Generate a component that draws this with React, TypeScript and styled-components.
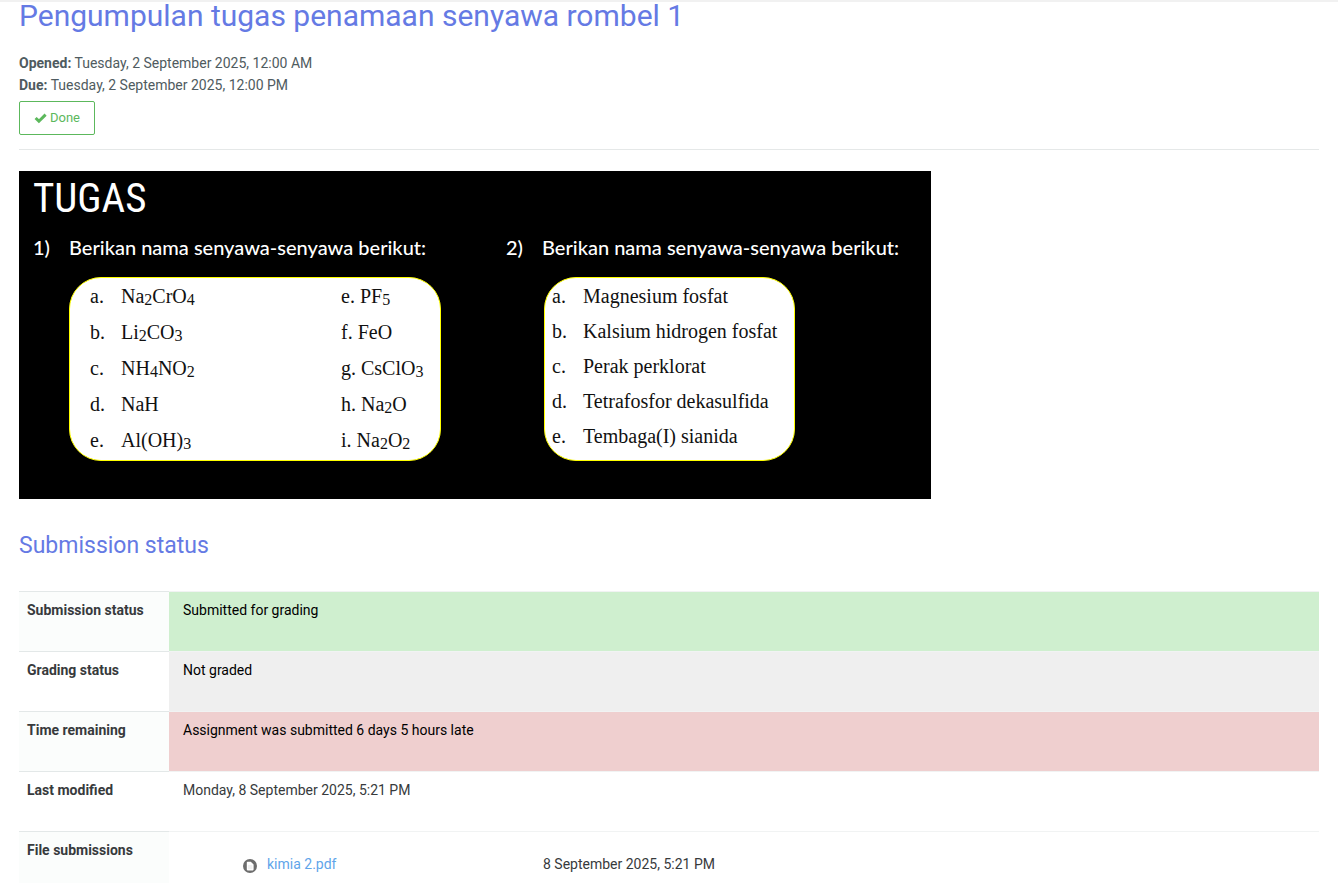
import React from 'react';
import styled, { createGlobalStyle } from 'styled-components';

const GlobalStyle = createGlobalStyle`
  *, *::before, *::after { box-sizing: border-box; }
  body {
    margin: 0;
    background: #fff;
    color: #373a3c;
    font-family: Roboto, "Liberation Sans", sans-serif;
    font-size: 14px;
    line-height: 22px;
  }
`;

const Page = styled.main`
  padding: 0 19px;
  border-top: 2px solid #f1f1f1;
`;

const Title = styled.h1`
  margin: 0 0 22px;
  color: #657ae4;
  font-size: 30px;
  font-weight: 400;
  line-height: 28px;
`;

const Dates = styled.div`
  color: #4f5b60;
`;

const DateLine = styled.p`
  margin: 0;
`;

const DoneButton = styled.button`
  display: inline-flex;
  align-items: center;
  gap: 3px;
  height: 34px;
  margin-top: 5px;
  padding: 0 14px;
  border: 1px solid #5cb85c;
  border-radius: 2px;
  background: #fff;
  color: #5cb85c;
  font: 13px/20px Roboto, "Liberation Sans", sans-serif;
`;

const Divider = styled.hr`
  height: 1px;
  margin: 14px 0 21px;
  border: 0;
  background: #e5e8e8;
`;

const Slide = styled.section`
  width: 912px;
  max-width: 100%;
  min-height: 328px;
  padding: 4px 14px 38px;
  background: #000;
  color: #fff;
`;

const SlideTitle = styled.h2`
  margin: 0 0 12px;
  font: 400 41px/46px "Liberation Sans Narrow", "Roboto Condensed", Roboto, sans-serif;
`;

const Questions = styled.div`
  display: grid;
  grid-template-columns: 473px 1fr;
`;

const Question = styled.div`
  display: grid;
  grid-template-columns: 36px 1fr;
  row-gap: 16px;
  align-content: start;
  font: 500 20px/28px Lato, sans-serif;
`;

const Card = styled.div<{ $width: number }>`
  display: flex;
  grid-column: 2;
  width: ${({ $width }) => $width}px;
  height: 184px;
  border: 1px solid #ff0;
  border-radius: 32px;
  background: #fff;
  color: #111;
`;

const Items = styled.ul<{ $line: number; $marker: number }>`
  margin: 0;
  padding: 0;
  list-style: none;
  font: 20px/${({ $line }) => $line}px "Liberation Serif", serif;

  li {
    display: grid;
    grid-template-columns: ${({ $marker }) => $marker}px auto;
    white-space: nowrap;
  }

  sub {
    font-size: 16px;
    line-height: 0;
    vertical-align: -2px;
  }
`;

const FormulaCard = styled(Card)`
  padding-left: 20px;

  ${Items}:first-child { width: 251px; }
`;

const NameCard = styled(Card)`
  margin-left: 2px;
  padding: 1px 0 0 7px;
`;

const Heading = styled.h3`
  margin: 33px 0 31px;
  color: #657ae4;
  font-size: 23px;
  font-weight: 400;
  line-height: 28px;
`;

const StatusTable = styled.table`
  width: 100%;
  border-collapse: collapse;
  table-layout: fixed;
`;

const Row = styled.tr<{ $last?: boolean }>`
  height: ${({ $last }) => ($last ? 52 : 60)}px;

  &:nth-child(odd) > th { background: #fbfdfc; }
`;

const Label = styled.th`
  width: 150px;
  padding: 7px 8px;
  border-top: 1px solid #e3e8e8;
  font-weight: 700;
  text-align: left;
  vertical-align: top;
`;

const tones = {
  plain: ['#fff', '#373a3c'],
  good: ['#cfefcf', '#000'],
  neutral: ['#efefef', '#000'],
  late: ['#efcfcf', '#000'],
};

const Value = styled.td<{ $tone: keyof typeof tones }>`
  padding: 7px 14px;
  border-top: 1px solid #f1f3f3;
  background: ${({ $tone }) => tones[$tone][0]};
  color: ${({ $tone }) => tones[$tone][1]};
  vertical-align: top;
`;

const FileRow = styled.div`
  display: grid;
  grid-template-columns: 300px 1fr;
  padding: 14px 0 0 60px;
`;

const FileName = styled.span`
  display: flex;
  align-items: center;
  gap: 10px;

  svg { margin-top: 4px; }
`;

const FileLink = styled.a`
  color: #5fa5ea;
  text-decoration: none;
`;

const CheckIcon = () => (
  <svg width="13" height="11" viewBox="0 0 13 11" aria-hidden="true">
    <path d="M1.6 5 4.9 8.2 11.6 1.6" fill="none" stroke="currentColor" strokeWidth="3" />
  </svg>
);

const FileIcon = () => (
  <svg width="14" height="14" viewBox="0 0 14 14" aria-hidden="true">
    <circle cx="7" cy="7" r="7" fill="#6d6d6d" />
    <path d="M4.6 2.8h3.2L10.6 5.4v5.2q0 .8-.8.8H4.6q-.8 0-.8-.8v-7q0-.8.8-.8z" fill="#fff" />
    <path d="M5 6h4.4v4.2H5z" fill="#f1f1f1" />
  </svg>
);

const leftFormulas = ['Na2CrO4', 'Li2CO3', 'NH4NO2', 'NaH', 'Al(OH)3'];
const rightFormulas = ['e. PF5', 'f. FeO', 'g. CsClO3', 'h. Na2O', 'i. Na2O2'];
const compounds = [
  'Magnesium fosfat',
  'Kalsium hidrogen fosfat',
  'Perak perklorat',
  'Tetrafosfor dekasulfida',
  'Tembaga(I) sianida',
];

const Formula = ({ text }: { text: string }) => (
  <span>
    {text.split(/(\d)/).map((part, i) => (/^\d$/.test(part) ? <sub key={i}>{part}</sub> : part))}
  </span>
);

const statuses: { label: string; value: string; tone: keyof typeof tones }[] = [
  { label: 'Submission status', value: 'Submitted for grading', tone: 'good' },
  { label: 'Grading status', value: 'Not graded', tone: 'neutral' },
  { label: 'Time remaining', value: 'Assignment was submitted 6 days 5 hours late', tone: 'late' },
  { label: 'Last modified', value: 'Monday, 8 September 2025, 5:21 PM', tone: 'plain' },
];

export default function App() {
  return (
    <>
      <GlobalStyle />
      <Page>
        <Title>Pengumpulan tugas penamaan senyawa rombel 1</Title>
        <Dates>
          <DateLine><strong>Opened:</strong> Tuesday, 2 September 2025, 12:00 AM</DateLine>
          <DateLine><strong>Due:</strong> Tuesday, 2 September 2025, 12:00 PM</DateLine>
        </Dates>
        <DoneButton type="button"><CheckIcon />Done</DoneButton>
        <Divider />
        <Slide>
          <SlideTitle>TUGAS</SlideTitle>
          <Questions>
            <Question>
              <span>1)</span>
              <span>Berikan nama senyawa-senyawa berikut:</span>
              <FormulaCard $width={372}>
                <Items $line={36} $marker={31}>
                  {leftFormulas.map((text, i) => (
                    <li key={text}><span>{'abcde'[i]}.</span><Formula text={text} /></li>
                  ))}
                </Items>
                <Items $line={36} $marker={0}>
                  {rightFormulas.map((text) => (
                    <li key={text}><Formula text={text} /></li>
                  ))}
                </Items>
              </FormulaCard>
            </Question>
            <Question>
              <span>2)</span>
              <span>Berikan nama senyawa-senyawa berikut:</span>
              <NameCard $width={251}>
                <Items $line={35} $marker={31}>
                  {compounds.map((text, i) => (
                    <li key={text}><span>{'abcde'[i]}.</span><span>{text}</span></li>
                  ))}
                </Items>
              </NameCard>
            </Question>
          </Questions>
        </Slide>
        <Heading>Submission status</Heading>
        <StatusTable>
          <tbody>
            {statuses.map(({ label, value, tone }) => (
              <Row key={label}>
                <Label scope="row">{label}</Label>
                <Value $tone={tone}>{value}</Value>
              </Row>
            ))}
            <Row $last>
              <Label scope="row">File submissions</Label>
              <Value $tone="plain">
                <FileRow>
                  <FileName><FileIcon /><FileLink href="#kimia-2">kimia 2.pdf</FileLink></FileName>
                  <span>8 September 2025, 5:21 PM</span>
                </FileRow>
              </Value>
            </Row>
          </tbody>
        </StatusTable>
      </Page>
    </>
  );
}
